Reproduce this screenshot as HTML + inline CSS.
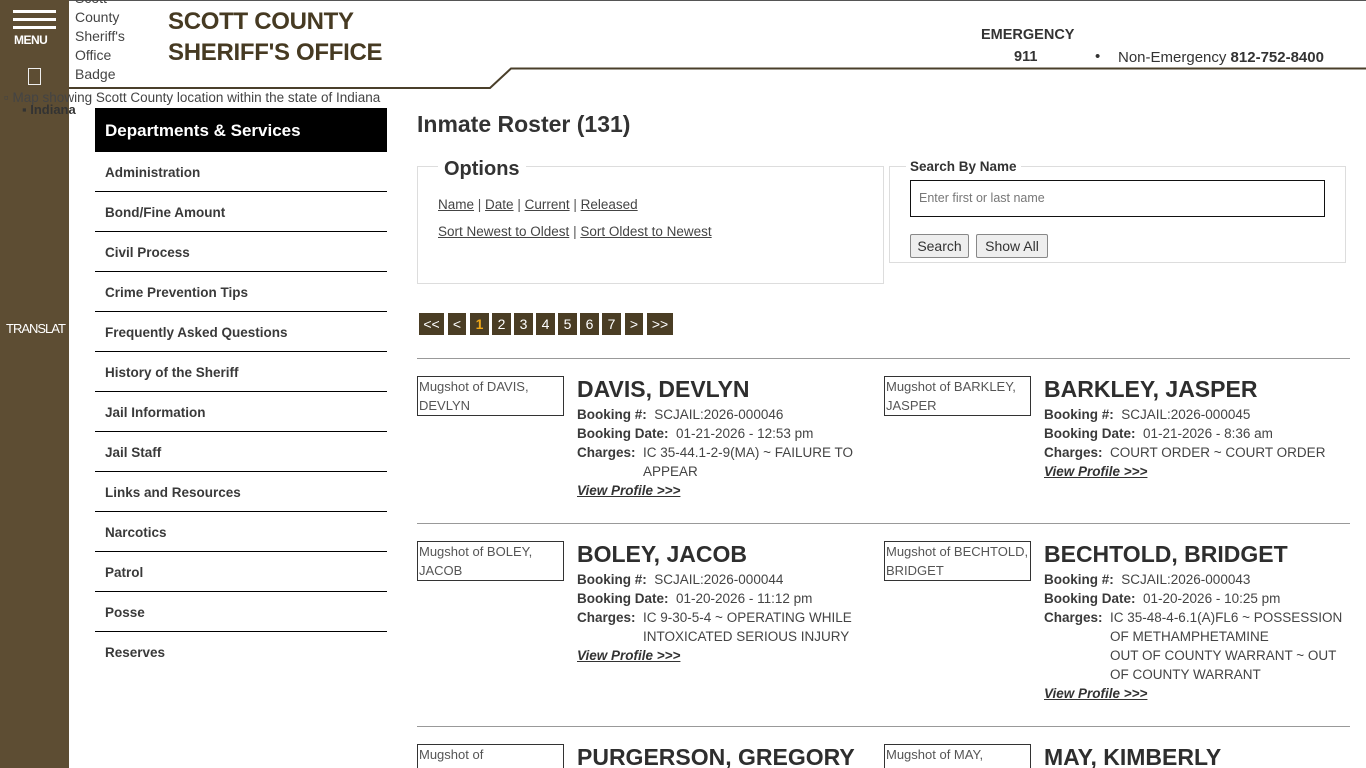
<!DOCTYPE html>
<html style="overflow:hidden;height:768px"><head><meta charset="utf-8"><style>
*{margin:0;padding:0;box-sizing:border-box}
body{width:1366px;height:768px;overflow:hidden;background:#fff;font-family:"Liberation Sans",sans-serif;color:#333;position:relative;font-size:13px}
.a{position:absolute;white-space:nowrap}
#side{position:absolute;left:0;top:0;width:69px;height:768px;background:#5d4d33}
.ham{position:absolute;left:13px;width:43px;height:3px;background:#fff}
.nav{position:absolute;left:95px;width:292px}
.nav .h{background:#000;color:#fff;font-weight:bold;font-size:17px;height:44px;line-height:46px;padding-left:10px}
.nav .i{height:40px;border-bottom:1px solid #000;font-weight:bold;font-size:13.5px;line-height:42px;padding-left:10px;color:#3a3a3a}
.pg{position:absolute;top:313px;height:22px;background:#4a3d24;color:#fff;font-size:14px;line-height:22px;text-align:center}
.img{position:absolute;width:147px;height:40px;border:1px solid #333;font-size:13px;color:#555;line-height:19px;padding-left:1px;overflow:hidden;white-space:normal}
.nm{position:absolute;font-size:23px;font-weight:bold;color:#2e2e2e;white-space:nowrap}
.ln{position:absolute;font-size:13.5px;line-height:19px;color:#444}
.ln b{color:#3a3a3a}
.ln .c{display:inline-block;vertical-align:top;white-space:normal}
.vp{font-style:italic;font-weight:bold;text-decoration:underline;color:#333}
.hr{position:absolute;left:417px;width:933px;height:1px;background:#999}
u{color:#444}
</style></head><body>
<div id="side">
<div class="ham" style="top:10px"></div><div class="ham" style="top:18px"></div><div class="ham" style="top:26px"></div>
<div class="a" style="left:14px;top:33px;color:#fff;font-weight:bold;font-size:12px;letter-spacing:-0.5px">MENU</div>
<div class="a" style="left:28px;top:68px;width:13px;height:17px;border:1.5px solid #eee"></div>
<div class="a" style="left:6px;top:321px;color:#fff;font-size:13px;letter-spacing:-1px">TRANSLAT</div>
</div>
<div class="a" style="left:69px;top:0;width:1297px;height:1px;background:#555"></div>
<svg class="a" style="left:69px;top:0" width="1297" height="92"><path d="M0 88 H421 L442 68.5 H1297" stroke="#4a3f2a" stroke-width="2" fill="none"/></svg>
<div class="a" style="left:75px;top:-11px;font-size:14px;line-height:19px;color:#444">Scott<br>County<br>Sheriff's<br>Office<br>Badge</div>
<div class="a" style="left:168px;top:6px;font-size:24px;font-weight:bold;line-height:31px;color:#463a22;letter-spacing:-0.3px">SCOTT COUNTY<br>SHERIFF'S OFFICE</div>
<div class="a" style="left:981px;top:27px;font-size:14.5px;font-weight:bold;color:#333">EMERGENCY</div>
<div class="a" style="left:1014px;top:49px;font-size:14.5px;font-weight:bold;color:#333">911</div>
<div class="a" style="left:1095px;top:48px;font-size:15px;color:#333">•</div>
<div class="a" style="left:1118px;top:49px;font-size:15px;color:#333">Non-Emergency <b>812-752-8400</b></div>
<div class="a" style="left:4px;top:90px;font-size:13.5px;color:#444">▫ Map showing Scott County location within the state of Indiana</div>
<div class="a" style="left:22px;top:102px;font-size:13px;color:#333;font-weight:bold">▪ Indiana</div>
<div class="nav" style="top:108px">
<div class="h">Departments &amp; Services</div>
<div class="i">Administration</div><div class="i">Bond/Fine Amount</div><div class="i">Civil Process</div><div class="i">Crime Prevention Tips</div><div class="i">Frequently Asked Questions</div><div class="i">History of the Sheriff</div><div class="i">Jail Information</div><div class="i">Jail Staff</div><div class="i">Links and Resources</div><div class="i">Narcotics</div><div class="i">Patrol</div><div class="i">Posse</div><div class="i" style="border:0">Reserves</div>
</div>
<div class="a" style="left:417px;top:111px;font-size:23px;font-weight:bold;color:#333">Inmate Roster (131)</div>
<div class="a" style="left:417px;top:166px;width:467px;height:118px;border:1px solid #ddd"></div>
<div class="a" style="left:444px;top:158px;font-size:20px;font-weight:bold;background:#fff;padding:0 6px;margin-left:-6px;color:#333">Options</div>
<div class="a" style="left:438px;top:197px;font-size:13.5px;color:#555"><u>Name</u> | <u>Date</u> | <u>Current</u> | <u>Released</u></div>
<div class="a" style="left:438px;top:224px;font-size:13.5px;color:#555"><u>Sort Newest to Oldest</u> | <u>Sort Oldest to Newest</u></div>
<div class="a" style="left:889px;top:166px;width:457px;height:97px;border:1px solid #ddd"></div>
<div class="a" style="left:906px;top:159px;font-size:13.5px;font-weight:bold;background:#fff;padding:0 4px;color:#333">Search By Name</div>
<div class="a" style="left:910px;top:180px;width:415px;height:37px;border:1.5px solid #111;font-size:12.5px;color:#777;line-height:35px;padding-left:8px">Enter first or last name</div>
<div class="a" style="left:910px;top:234px;width:59px;height:24px;border:1px solid #888;border-radius:2px;background:#eee;font-size:14px;line-height:22px;text-align:center">Search</div>
<div class="a" style="left:976px;top:234px;width:72px;height:24px;border:1px solid #888;border-radius:2px;background:#eee;font-size:14px;line-height:22px;text-align:center">Show All</div>
<div class="pg" style="left:419px;width:25px">&lt;&lt;</div>
<div class="pg" style="left:448px;width:18px">&lt;</div>
<div class="pg" style="left:470px;width:19px;color:#f0a818;font-weight:bold">1</div>
<div class="pg" style="left:492px;width:19px">2</div>
<div class="pg" style="left:514px;width:19px">3</div>
<div class="pg" style="left:536px;width:19px">4</div>
<div class="pg" style="left:558px;width:19px">5</div>
<div class="pg" style="left:580px;width:19px">6</div>
<div class="pg" style="left:602px;width:19px">7</div>
<div class="pg" style="left:625px;width:18px">&gt;</div>
<div class="pg" style="left:647px;width:26px">&gt;&gt;</div>
<div class="hr" style="top:358px"></div>
<div class="hr" style="top:523px"></div>
<div class="hr" style="top:726px"></div>

<div class="img" style="left:417px;top:376px">Mugshot of DAVIS, DEVLYN</div>
<div class="nm" style="left:577px;top:376px">DAVIS, DEVLYN</div>
<div class="ln" style="left:577px;top:405px"><b>Booking #:</b>&nbsp; SCJAIL:2026-000046<br><b>Booking Date:</b>&nbsp; 01-21-2026 - 12:53 pm<br><b>Charges:</b>&nbsp; <span class="c" style="width:220px">IC 35-44.1-2-9(MA) ~ FAILURE TO APPEAR</span><br><span class="vp">View Profile &gt;&gt;&gt;</span></div>

<div class="img" style="left:884px;top:376px">Mugshot of BARKLEY, JASPER</div>
<div class="nm" style="left:1044px;top:376px">BARKLEY, JASPER</div>
<div class="ln" style="left:1044px;top:405px"><b>Booking #:</b>&nbsp; SCJAIL:2026-000045<br><b>Booking Date:</b>&nbsp; 01-21-2026 - 8:36 am<br><b>Charges:</b>&nbsp; <span class="c">COURT ORDER ~ COURT ORDER</span><br><span class="vp">View Profile &gt;&gt;&gt;</span></div>

<div class="img" style="left:417px;top:541px">Mugshot of BOLEY, JACOB</div>
<div class="nm" style="left:577px;top:541px">BOLEY, JACOB</div>
<div class="ln" style="left:577px;top:570px"><b>Booking #:</b>&nbsp; SCJAIL:2026-000044<br><b>Booking Date:</b>&nbsp; 01-20-2026 - 11:12 pm<br><b>Charges:</b>&nbsp; <span class="c" style="width:220px">IC 9-30-5-4 ~ OPERATING WHILE INTOXICATED SERIOUS INJURY</span><br><span class="vp">View Profile &gt;&gt;&gt;</span></div>

<div class="img" style="left:884px;top:541px">Mugshot of BECHTOLD, BRIDGET</div>
<div class="nm" style="left:1044px;top:541px">BECHTOLD, BRIDGET</div>
<div class="ln" style="left:1044px;top:570px"><b>Booking #:</b>&nbsp; SCJAIL:2026-000043<br><b>Booking Date:</b>&nbsp; 01-20-2026 - 10:25 pm<br><b>Charges:</b>&nbsp; <span class="c" style="width:236px">IC 35-48-4-6.1(A)FL6 ~ POSSESSION OF METHAMPHETAMINE<br>OUT OF COUNTY WARRANT ~ OUT OF COUNTY WARRANT</span><br><span class="vp">View Profile &gt;&gt;&gt;</span></div>

<div class="img" style="left:417px;top:744px;height:24px;border-bottom:0">Mugshot of</div>
<div class="nm" style="left:577px;top:744px">PURGERSON, GREGORY</div>
<div class="img" style="left:884px;top:744px;height:24px;border-bottom:0">Mugshot of MAY,</div>
<div class="nm" style="left:1044px;top:744px">MAY, KIMBERLY</div>
</body></html>
